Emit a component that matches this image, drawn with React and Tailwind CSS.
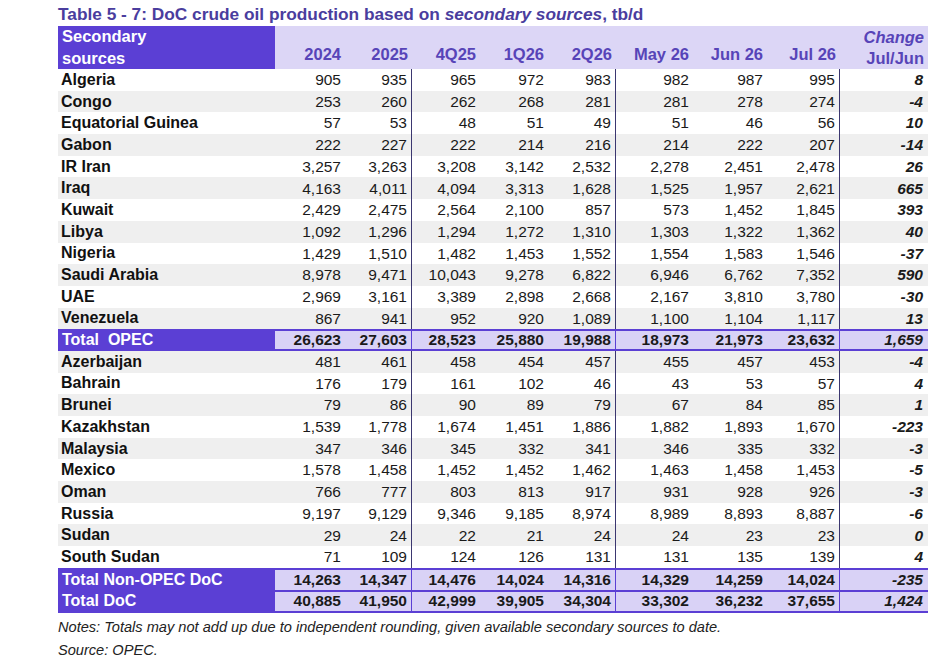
import React from 'react';

const cols = 'grid grid-cols-[217px_70px_67px_68px_68px_68px_77px_74px_73px_88px]';

const opec = [
    ['Algeria', '905', '935', '965', '972', '983', '982', '987', '995', '8'],
    ['Congo', '253', '260', '262', '268', '281', '281', '278', '274', '-4'],
    ['Equatorial Guinea', '57', '53', '48', '51', '49', '51', '46', '56', '10'],
    ['Gabon', '222', '227', '222', '214', '216', '214', '222', '207', '-14'],
    ['IR Iran', '3,257', '3,263', '3,208', '3,142', '2,532', '2,278', '2,451', '2,478', '26'],
    ['Iraq', '4,163', '4,011', '4,094', '3,313', '1,628', '1,525', '1,957', '2,621', '665'],
    ['Kuwait', '2,429', '2,475', '2,564', '2,100', '857', '573', '1,452', '1,845', '393'],
    ['Libya', '1,092', '1,296', '1,294', '1,272', '1,310', '1,303', '1,322', '1,362', '40'],
    ['Nigeria', '1,429', '1,510', '1,482', '1,453', '1,552', '1,554', '1,583', '1,546', '-37'],
    ['Saudi Arabia', '8,978', '9,471', '10,043', '9,278', '6,822', '6,946', '6,762', '7,352', '590'],
    ['UAE', '2,969', '3,161', '3,389', '2,898', '2,668', '2,167', '3,810', '3,780', '-30'],
    ['Venezuela', '867', '941', '952', '920', '1,089', '1,100', '1,104', '1,117', '13'],
];

const nonOpec = [
    ['Azerbaijan', '481', '461', '458', '454', '457', '455', '457', '453', '-4'],
    ['Bahrain', '176', '179', '161', '102', '46', '43', '53', '57', '4'],
    ['Brunei', '79', '86', '90', '89', '79', '67', '84', '85', '1'],
    ['Kazakhstan', '1,539', '1,778', '1,674', '1,451', '1,886', '1,882', '1,893', '1,670', '-223'],
    ['Malaysia', '347', '346', '345', '332', '341', '346', '335', '332', '-3'],
    ['Mexico', '1,578', '1,458', '1,452', '1,452', '1,462', '1,463', '1,458', '1,453', '-5'],
    ['Oman', '766', '777', '803', '813', '917', '931', '928', '926', '-3'],
    ['Russia', '9,197', '9,129', '9,346', '9,185', '8,974', '8,989', '8,893', '8,887', '-6'],
    ['Sudan', '29', '24', '22', '21', '24', '24', '23', '23', '0'],
    ['South Sudan', '71', '109', '124', '126', '131', '131', '135', '139', '4'],
];

const heads = ['2024', '2025', '4Q25', '1Q26', '2Q26', 'May 26', 'Jun 26', 'Jul 26'];

// value columns (0-based) with a vertical rule on their right side
const ruled = [1, 4, 7];

const DataRow = ({ row, shaded }) => (
    <div className={`${cols} h-[21.7px] items-center leading-none ${shaded ? 'bg-[#efefef]' : 'bg-white'}`}>
        <div className="pl-[3px] text-[16px] font-bold text-[#111]">{row[0]}</div>
        {row.slice(1, 9).map((v, i) => (
            <div
                key={i}
                className={`h-full flex items-center justify-end pr-[4px] text-[15.5px] text-[#1a1a1a] ${ruled.includes(i) ? 'border-r border-[#3b3770]' : ''}`}
            >
                {v}
            </div>
        ))}
        <div className="pr-[5px] text-right text-[15.5px] font-bold italic text-[#1a1a1a]">{row[9]}</div>
    </div>
);

const TotalRow = ({ row, bottom, tall }) => (
    <div className={`${cols} ${tall ? 'h-[23px]' : 'h-[21.7px]'} items-stretch leading-none bg-[#d9d2f6] border-t-2 border-[#5b3fd4] ${bottom ? 'border-b-2' : ''}`}>
        <div className="bg-[#5b3fd4] pl-[4px] flex items-center text-[16px] font-bold text-white whitespace-pre">{row[0]}</div>
        {row.slice(1, 9).map((v, i) => (
            <div
                key={i}
                className={`flex items-center justify-end pr-[4px] text-[15.5px] font-bold text-[#1a1a1a] ${ruled.includes(i) ? 'border-r border-[#5b3fd4]' : ''}`}
            >
                {v}
            </div>
        ))}
        <div className="flex items-center justify-end pr-[5px] text-[15.5px] font-bold italic text-[#1a1a1a]">{row[9]}</div>
    </div>
);

const App = () => {
    return (
        <div className="min-h-[660px] bg-white pl-[58px] pt-[3px] font-['Liberation_Sans',Arial,sans-serif]">
            <h1 className="h-[23px] text-[17.3px] font-bold text-[#4a3d9e] leading-[22px]">
                Table 5 - 7: DoC crude oil production based on <i>secondary sources</i>, tb/d
            </h1>

            <div className="w-[870px]">
                <div className={`${cols} h-[43px] bg-[#dcd6f6]`}>
                    <div className="bg-[#5b3fd4] pl-[4px] text-[16.5px] font-bold text-white leading-[21.5px]">
                        Secondary<br />sources
                    </div>
                    {heads.map(h => (
                        <div key={h} className="flex items-end justify-end pr-[4px] pb-[2px] text-[16.5px] font-bold text-[#5744b8]">
                            {h}
                        </div>
                    ))}
                    <div className="flex flex-col items-end justify-end pr-[4px] text-[16.5px] font-bold text-[#5744b8] leading-[21px]">
                        <span className="italic">Change</span>
                        <span>Jul/Jun</span>
                    </div>
                </div>

                {opec.map((r, i) => <DataRow key={r[0]} row={r} shaded={i % 2 === 1} />)}
                <TotalRow bottom row={['Total  OPEC', '26,623', '27,603', '28,523', '25,880', '19,988', '18,973', '21,973', '23,632', '1,659']} />
                {nonOpec.map((r, i) => <DataRow key={r[0]} row={r} shaded={i % 2 === 0} />)}
                <TotalRow row={['Total Non-OPEC DoC', '14,263', '14,347', '14,476', '14,024', '14,316', '14,329', '14,259', '14,024', '-235']} />
                <TotalRow bottom tall row={['Total DoC', '40,885', '41,950', '42,999', '39,905', '34,304', '33,302', '36,232', '37,655', '1,424']} />
            </div>

            <p className="mt-[3px] text-[14.6px] italic text-[#222] leading-[22px]">
                Notes: Totals may not add up due to independent rounding, given available secondary sources to date.
            </p>
            <p className="mt-[1px] text-[14.6px] italic text-[#222] leading-[22px]">Source: OPEC.</p>
        </div>
    );
};

export default App;
